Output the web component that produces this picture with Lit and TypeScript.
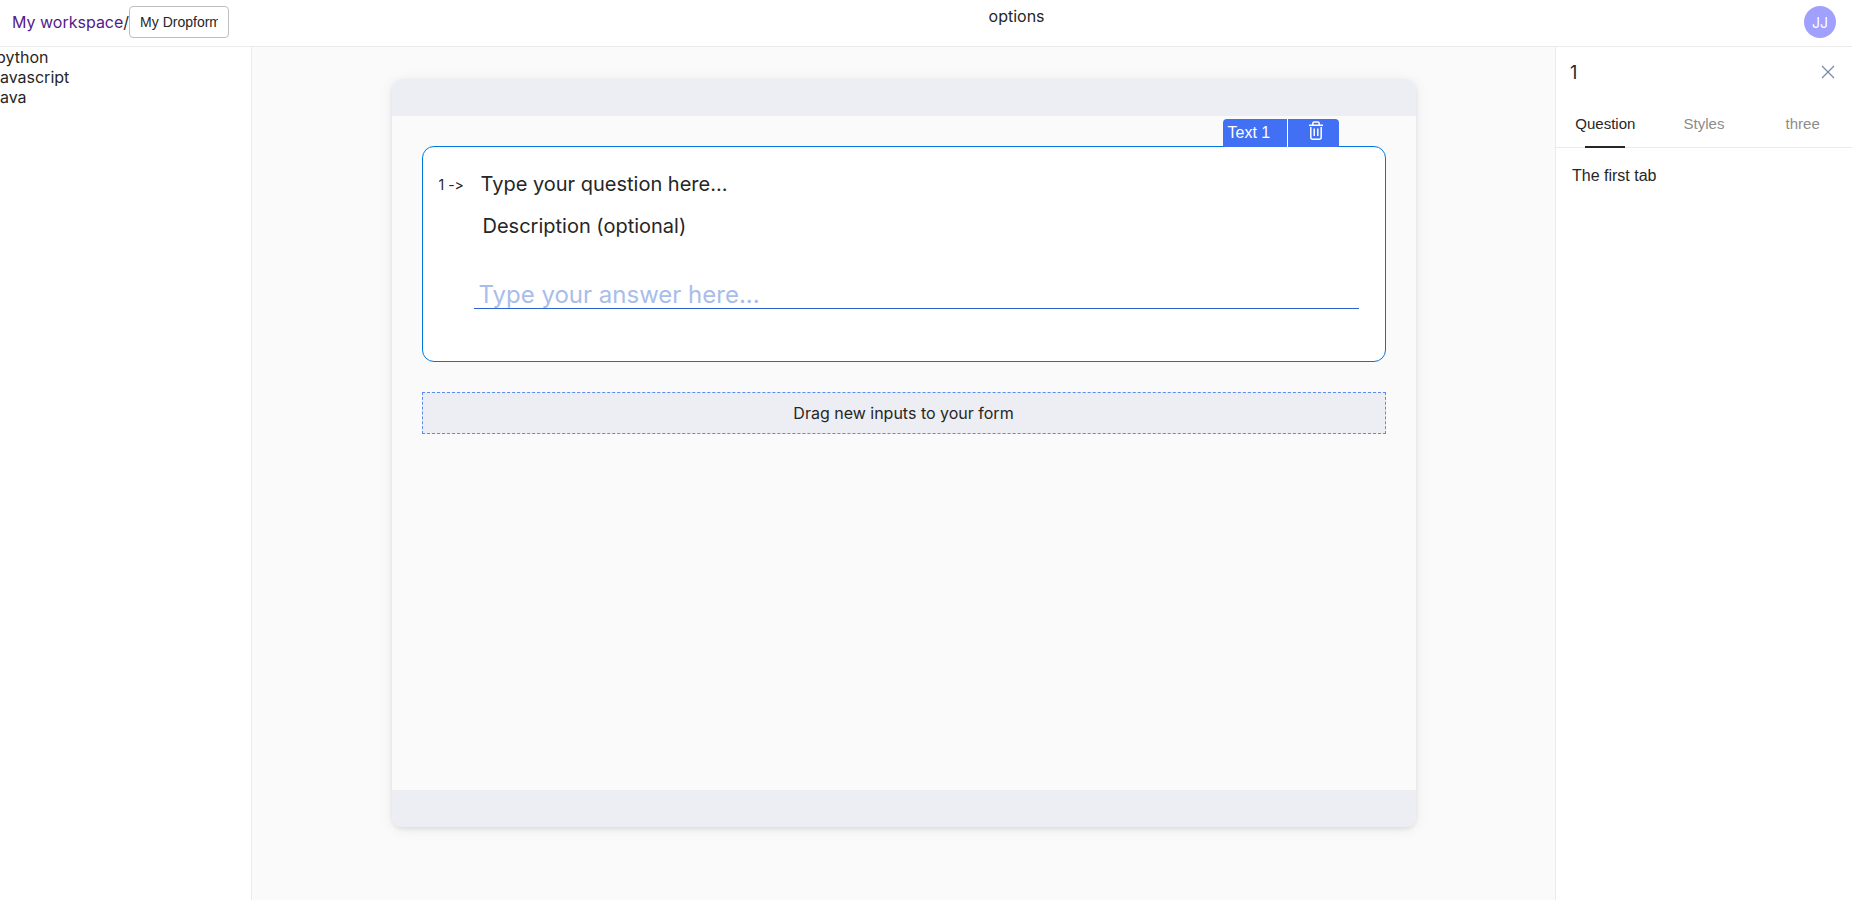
import { LitElement, html, css } from "lit";
import { customElement, property, state } from "lit/decorators.js";

@customElement("form-header")
class FormHeader extends LitElement {
  static styles = css`
    :host {
      display: flex;
      justify-content: space-between;
      align-items: flex-start;
      box-sizing: border-box;
      height: 47px;
      padding: 6px 16px 0 12px;
      background: #fff;
      border-bottom: 1px solid #ebebeb;
    }
    .crumbs {
      display: flex;
      align-items: center;
    }
    .crumbs a {
      color: #551a8b;
      text-decoration: none;
    }
    .name {
      box-sizing: border-box;
      width: 100px;
      height: 32px;
      padding: 0 10px;
      border: 1px solid #bfbfbf;
      border-radius: 4px;
      color: #262627;
      background: #fff;
      font: 14px "Liberation Sans", Arial, sans-serif;
    }
    .avatar {
      display: grid;
      place-items: center;
      width: 32px;
      height: 32px;
      border: 0;
      padding: 0;
      border-radius: 50%;
      background: #a0a0ff;
      color: #fff;
      font: 14px "Inter", sans-serif;
    }
  `;

  render() {
    return html`
      <nav class="crumbs">
        <a href="#">My workspace</a><span>/</span>
        <input class="name" aria-label="Form name" .value=${"My Dropform"} />
      </nav>
      <div>options</div>
      <button class="avatar" aria-label="Account JJ">JJ</button>
    `;
  }
}

@customElement("question-card")
class QuestionCard extends LitElement {
  @property({ type: Number }) number = 1;

  static styles = css`
    :host {
      display: block;
      position: relative;
      box-sizing: border-box;
      padding: 24px 26px 52px 16px;
      background: #fff;
      border: 1px solid #0077dd;
      border-radius: 12px;
    }
    .tag {
      position: absolute;
      right: 46px;
      bottom: 100%;
      display: flex;
      height: 28px;
      border-radius: 4px 4px 0 0;
      overflow: hidden;
      background: #4170f5;
      color: #fff;
      font: 16px/27px "Liberation Sans", Arial, sans-serif;
    }
    .kind {
      width: 59px;
      padding-left: 5px;
      border-right: 1px solid #fff;
    }
    .remove {
      display: grid;
      place-items: center;
      width: 51px;
      padding: 0 0 4px 5px;
      border: 0;
      background: none;
      color: inherit;
    }
    .row {
      display: grid;
      grid-template-columns: 35px 1fr;
      align-items: center;
    }
    .number {
      font-size: 14px;
      font-variant-ligatures: no-contextual;
    }
    .field {
      box-sizing: border-box;
      width: 100%;
      border: 0;
      outline: 0;
      background: none;
      color: #262627;
      font-family: "Inter", sans-serif;
      font-size: 20px;
      height: 26px;
      padding: 0 7px;
    }
    .field::placeholder {
      color: #262627;
      opacity: 1;
    }
    .description {
      margin-top: 16px;
      padding: 0 9px;
    }
    .answer {
      margin-top: 40px;
      height: 30px;
      padding: 2px 5px 0;
      border-bottom: 1px solid #2f62cf;
      font-size: 24px;
    }
    .answer::placeholder {
      color: #a9bdeb;
    }
    .body {
      grid-column: 2;
      display: grid;
    }
  `;

  render() {
    return html`
      <div class="tag">
        <span class="kind">Text ${this.number}</span>
        <button class="remove" aria-label="Delete question">
          <svg width="16" height="20" viewBox="0 0 16 20" fill="none" stroke="#fff" stroke-width="1.5">
            <path d="M1 4.200h14M4.800 4V2.500Q4.800 1 6.300 1h3.400Q11.200 1 11.200 2.500V4" />
            <path d="M2.800 6v10.300Q2.800 18.300 4.800 18.300h6.400Q13.200 18.300 13.200 16.300V6M6.200 7.500v7.500M9.800 7.500v7.500" />
          </svg>
        </button>
      </div>
      <div class="row">
        <span class="number">${this.number} -&gt;</span>
        <input class="field" aria-label="Question" placeholder="Type your question here..." />
        <div class="body">
          <input class="field description" aria-label="Description" placeholder="Description (optional)" />
          <input class="field answer" aria-label="Answer" placeholder="Type your answer here..." />
        </div>
      </div>
    `;
  }
}

@customElement("settings-panel")
class SettingsPanel extends LitElement {
  @state() active = 0;
  tabs = ["Question", "Styles", "three"];
  panes = ["The first tab", "The second tab", "The third tab"];

  static styles = css`
    :host {
      display: block;
      background: #fff;
      border-left: 1px solid #ebebeb;
      font-family: "Liberation Sans", Arial, sans-serif;
    }
    .head {
      display: flex;
      justify-content: space-between;
      align-items: center;
      height: 50px;
      padding: 0 16px 0 14px;
      font: 18px "Inter", sans-serif;
    }
    .close {
      display: grid;
      padding: 0;
      border: 0;
      background: none;
    }
    .tabs {
      display: grid;
      grid-template-columns: repeat(3, 1fr);
      border-bottom: 1px solid #ebebeb;
    }
    .tab {
      height: 51px;
      padding: 4px 0 0;
      border: 0;
      background: none;
      color: #8c8c8c;
      font: 15px "Liberation Sans", Arial, sans-serif;
      display: grid;
      grid-template-rows: 1fr 2px;
      place-items: center;
      margin-bottom: -1px;
    }
    .tab[aria-selected="true"] {
      color: #262627;
    }
    .tab[aria-selected="true"]::after {
      content: "";
      width: 40px;
      height: 2px;
      background: #262627;
    }
    .pane {
      padding: 18px 16px;
      line-height: 20px;
    }
  `;

  render() {
    return html`
      <div class="head">
        <span>1</span>
        <button class="close" aria-label="Close">
          <svg width="16" height="16" viewBox="0 0 16 16" stroke="#7a8ba8" stroke-width="1.3">
            <path d="M2 2l12 12M14 2L2 14" />
          </svg>
        </button>
      </div>
      <div class="tabs" role="tablist">
        ${this.tabs.map(
          (t, i) => html`<button
            class="tab"
            role="tab"
            aria-selected=${this.active === i}
            @click=${() => (this.active = i)}
          >${t}</button>`
        )}
      </div>
      <div class="pane" role="tabpanel">${this.panes[this.active]}</div>
    `;
  }
}

@customElement("app-root")
class AppRoot extends LitElement {
  static styles = css`
    :host {
      display: flex;
      flex-direction: column;
      min-height: 100vh;
      background: #fafafa;
      color: #262627;
      font: 16px "Inter", sans-serif;
    }
    .main {
      flex: 1;
      display: grid;
      grid-template-columns: 252px 1fr 297px;
    }
    .palette {
      background: #fff;
      border-right: 1px solid #ebebeb;
      overflow: hidden;
      line-height: 20px;
    }
    .palette ul {
      list-style: none;
      margin: 0 0 0 -4px;
      padding: 0;
    }
    .stage {
      padding: 32px 24px 73px;
      display: flex;
      justify-content: center;
    }
    .sheet {
      display: flex;
      flex-direction: column;
      width: 100%;
      max-width: 1024px;
      border-radius: 10px;
      overflow: hidden;
      box-shadow: 0 2px 4px rgba(0, 0, 0, 0.08), 0 2px 14px rgba(0, 0, 0, 0.07);
    }
    .bar {
      height: 37px;
      background: #edeef3;
    }
    .content {
      flex: 1;
      display: flex;
      flex-direction: column;
      gap: 30px;
      padding: 30px;
    }
    .drop {
      padding: 10px;
      border: 1px dashed #5b8def;
      background: #edeef3;
      text-align: center;
      line-height: 20px;
    }
  `;

  render() {
    return html`
      <form-header></form-header>
      <div class="main">
        <aside class="palette">
          <ul>
            ${["python", "javascript", "java"].map((n) => html`<li>${n}</li>`)}
          </ul>
        </aside>
        <main class="stage">
          <section class="sheet">
            <div class="bar"></div>
            <div class="content">
              <question-card></question-card>
              <div class="drop">Drag new inputs to your form</div>
            </div>
            <div class="bar"></div>
          </section>
        </main>
        <settings-panel></settings-panel>
      </div>
    `;
  }
}
